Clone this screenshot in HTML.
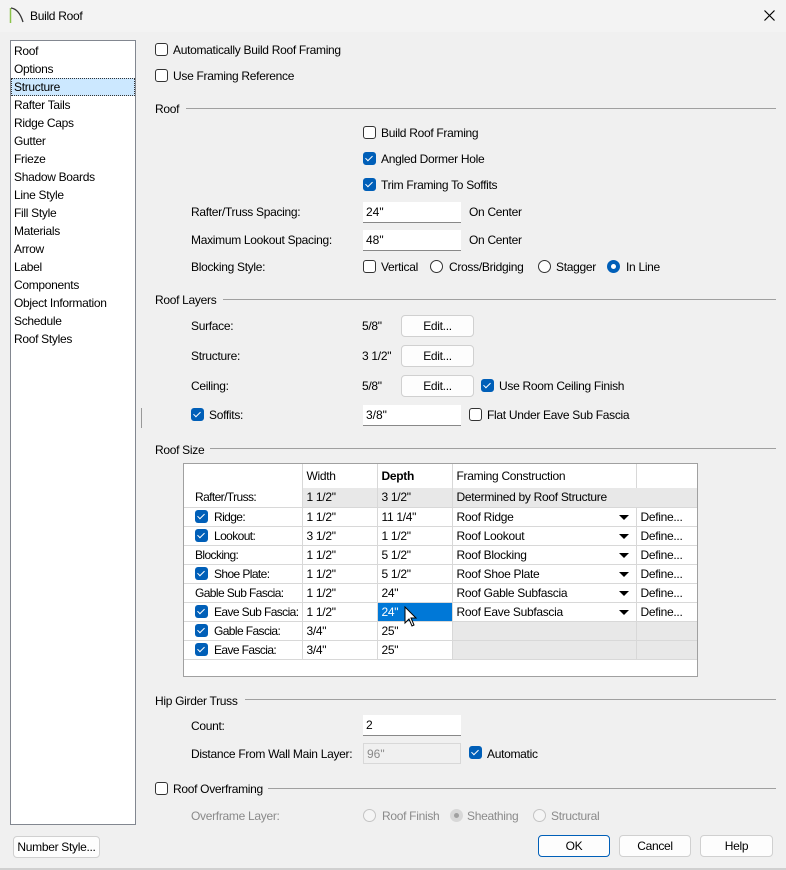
<!DOCTYPE html>
<html><head><meta charset="utf-8"><style>
*{box-sizing:border-box;margin:0;padding:0}
body{width:786px;height:870px;background:#f0f0f0;font:12px/14px "Liberation Sans",sans-serif;color:#000;position:relative;overflow:hidden}
.a{position:absolute;white-space:nowrap}
.t{position:absolute;white-space:nowrap;letter-spacing:-0.3px}
.cb{position:absolute;width:13px;height:13px;border:1px solid #333;border-radius:3px;background:#fff}
.cb.on{background:#005fb8;border-color:#005fb8}
.cb.on::after{content:"";position:absolute;left:3px;top:1px;width:3px;height:6px;border:solid #fff;border-width:0 1.3px 1.3px 0;transform:rotate(45deg)}
.rd{position:absolute;width:13px;height:13px;border:1px solid #333;border-radius:50%;background:#fff}
.rd.on{background:#005fb8;border-color:#005fb8}
.rd.on::after{content:"";position:absolute;left:3px;top:3px;width:5px;height:5px;border-radius:50%;background:#fff}
.rd.dis{border-color:#c4c4c4;background:#f5f5f5}
.rd.dis.on::after{content:"";position:absolute;left:3px;top:3px;width:5px;height:5px;border-radius:50%;background:#a0a0a0}
.rd.dis.on{background:#d8d8d8;border-color:#d8d8d8}
.in{position:absolute;height:21px;width:98px;background:#fff;border-bottom:1px solid #888;padding:3px 3px;}
.btn{position:absolute;height:22px;background:#fdfdfd;border:1px solid #d0d0d0;border-radius:4px;text-align:center;line-height:20px;letter-spacing:-0.3px}
.hl{position:absolute;height:1px;background:#a0a0a0}
.gr{color:#8a8a8a}
table{position:absolute;left:184px;top:464px;width:513px;border-collapse:collapse;background:#fff;table-layout:fixed}
td{border-right:1px solid #d8d8d8;border-bottom:1px solid #d8d8d8;height:19px;padding:0 4px;white-space:nowrap;letter-spacing:-0.3px;position:relative;overflow:hidden}
td:first-child{padding-left:11px;letter-spacing:-0.6px}
tr.h td{height:24px;border-bottom:none}
.g{background:#e8e8e8}
.tcb{position:relative;display:inline-block;vertical-align:-2px;margin-right:6px;width:13px;height:13px;border-radius:3px;background:#005fb8}
.tcb::after{content:"";position:absolute;left:4px;top:2px;width:3px;height:6px;border:solid #fff;border-width:0 1.3px 1.3px 0;transform:rotate(45deg)}
.arr{position:absolute;right:7px;top:7px;width:0;height:0;border-left:5px solid transparent;border-right:5px solid transparent;border-top:5px solid #000}
</style></head><body>
<div class="a" style="left:0;top:0;width:786px;height:32px;background:#f3f3f3"></div>
<svg class="a" style="left:9px;top:6px" width="16" height="18"><path d="M1.5 17V2" stroke="#8bc34a" stroke-width="1.5"/><path d="M2 2 Q10 3 14 16" stroke="#333" stroke-width="1.3" fill="none"/></svg>
<div class="t" style="left:30px;top:9px">Build Roof</div>
<svg class="a" style="left:764px;top:10px" width="11" height="11"><path d="M0.5 0.5L10.5 10.5M10.5 0.5L0.5 10.5" stroke="#000" stroke-width="1.2"/></svg>
<div class="a" style="left:0;top:868px;width:786px;height:2px;background:#d0d0d0"></div>

<div class="a" style="left:10px;top:40px;width:126px;height:785px;background:#fff;border:1px solid #828790"></div>
<div class="a" style="left:11px;top:78px;width:124px;height:18px;background:#cce8ff;border:1px dotted #333"></div>
<div class="t" style="left:14px;top:42px;line-height:18px">Roof<br>Options<br>Structure<br>Rafter Tails<br>Ridge Caps<br>Gutter<br>Frieze<br>Shadow Boards<br>Line Style<br>Fill Style<br>Materials<br>Arrow<br>Label<br>Components<br>Object Information<br>Schedule<br>Roof Styles</div>
<div class="btn" style="left:13px;top:836px;width:87px">Number Style...</div>

<div class="cb" style="left:155px;top:43px"></div><div class="t" style="left:173px;top:43px">Automatically Build Roof Framing</div>
<div class="cb" style="left:155px;top:69px"></div><div class="t" style="left:173px;top:69px">Use Framing Reference</div>

<div class="t" style="left:155px;top:102px">Roof</div><div class="hl" style="left:186px;top:108px;width:590px"></div>
<div class="cb" style="left:363px;top:126px"></div><div class="t" style="left:381px;top:126px">Build Roof Framing</div>
<div class="cb on" style="left:363px;top:152px"></div><div class="t" style="left:381px;top:152px">Angled Dormer Hole</div>
<div class="cb on" style="left:363px;top:178px"></div><div class="t" style="left:381px;top:178px">Trim Framing To Soffits</div>
<div class="t" style="left:191px;top:205px">Rafter/Truss Spacing:</div>
<div class="in" style="left:363px;top:202px">24"</div><div class="t" style="left:469px;top:205px">On Center</div>
<div class="t" style="left:191px;top:233px">Maximum Lookout Spacing:</div>
<div class="in" style="left:363px;top:230px">48"</div><div class="t" style="left:469px;top:233px">On Center</div>
<div class="t" style="left:191px;top:260px">Blocking Style:</div>
<div class="cb" style="left:363px;top:260px"></div><div class="t" style="left:381px;top:260px">Vertical</div>
<div class="rd" style="left:430px;top:260px"></div><div class="t" style="left:449px;top:260px">Cross/Bridging</div>
<div class="rd" style="left:538px;top:260px"></div><div class="t" style="left:556px;top:260px">Stagger</div>
<div class="rd on" style="left:607px;top:260px"></div><div class="t" style="left:626px;top:260px">In Line</div>

<div class="t" style="left:155px;top:293px">Roof Layers</div><div class="hl" style="left:223px;top:299px;width:553px"></div>
<div class="t" style="left:191px;top:319px">Surface:</div><div class="t" style="left:362px;top:319px">5/8"</div><div class="btn" style="left:401px;top:315px;width:73px">Edit...</div>
<div class="t" style="left:191px;top:349px">Structure:</div><div class="t" style="left:362px;top:349px">3 1/2"</div><div class="btn" style="left:401px;top:345px;width:73px">Edit...</div>
<div class="t" style="left:191px;top:379px">Ceiling:</div><div class="t" style="left:362px;top:379px">5/8"</div><div class="btn" style="left:401px;top:375px;width:73px">Edit...</div>
<div class="cb on" style="left:481px;top:379px"></div><div class="t" style="left:499px;top:379px">Use Room Ceiling Finish</div>
<div class="a" style="left:141px;top:408px;width:1px;height:20px;background:#999"></div>
<div class="cb on" style="left:191px;top:408px"></div><div class="t" style="left:209px;top:408px">Soffits:</div>
<div class="in" style="left:363px;top:405px">3/8"</div>
<div class="cb" style="left:469px;top:408px"></div><div class="t" style="left:487px;top:408px">Flat Under Eave Sub Fascia</div>

<div class="t" style="left:155px;top:443px">Roof Size</div><div class="hl" style="left:210px;top:448px;width:566px"></div>

<div class="a" style="left:183px;top:463px;width:515px;height:214px;background:#fff;border:1px solid #a0a0a0"></div>
<table>
<colgroup><col style="width:118px"><col style="width:75px"><col style="width:75px"><col style="width:184px"><col style="width:61px"></colgroup>
<tr class="h"><td></td><td>Width</td><td><b>Depth</b></td><td>Framing Construction</td><td style="border-right:none"></td></tr>
<tr><td>Rafter/Truss:</td><td class="g">1 1/2"</td><td class="g">3 1/2"</td><td class="g" colspan="2" style="border-right:none">Determined by Roof Structure</td></tr>
<tr><td><span class="tcb"></span>Ridge:</td><td>1 1/2"</td><td>11 1/4"</td><td>Roof Ridge<span class="arr"></span></td><td style="border-right:none">Define...</td></tr>
<tr><td><span class="tcb"></span>Lookout:</td><td>3 1/2"</td><td>1 1/2"</td><td>Roof Lookout<span class="arr"></span></td><td style="border-right:none">Define...</td></tr>
<tr><td>Blocking:</td><td>1 1/2"</td><td>5 1/2"</td><td>Roof Blocking<span class="arr"></span></td><td style="border-right:none">Define...</td></tr>
<tr><td><span class="tcb"></span>Shoe Plate:</td><td>1 1/2"</td><td>5 1/2"</td><td>Roof Shoe Plate<span class="arr"></span></td><td style="border-right:none">Define...</td></tr>
<tr><td>Gable Sub Fascia:</td><td>1 1/2"</td><td>24"</td><td>Roof Gable Subfascia<span class="arr"></span></td><td style="border-right:none">Define...</td></tr>
<tr><td><span class="tcb"></span>Eave Sub Fascia:</td><td>1 1/2"</td><td style="background:#0078d7;color:#fff">24"</td><td>Roof Eave Subfascia<span class="arr"></span></td><td style="border-right:none">Define...</td></tr>
<tr><td><span class="tcb"></span>Gable Fascia:</td><td>3/4"</td><td>25"</td><td class="g"></td><td class="g" style="border-right:none"></td></tr>
<tr><td><span class="tcb"></span>Eave Fascia:</td><td>3/4"</td><td>25"</td><td class="g"></td><td class="g" style="border-right:none"></td></tr>
</table>
<svg class="a" style="left:404px;top:606px" width="14" height="22"><path d="M1 1V17L5 13L8 20L10 19L7 12H12Z" fill="#fff" stroke="#000" stroke-width="1"/></svg>

<div class="t" style="left:155px;top:694px">Hip Girder Truss</div><div class="hl" style="left:245px;top:699px;width:531px"></div>
<div class="t" style="left:191px;top:719px">Count:</div><div class="in" style="left:363px;top:715px">2</div>
<div class="t" style="left:191px;top:747px">Distance From Wall Main Layer:</div>
<div class="in gr" style="left:363px;top:743px;background:#f0f0f0;border:1px solid #d8d8d8">96"</div>
<div class="cb on" style="left:469px;top:746px"></div><div class="t" style="left:487px;top:747px">Automatic</div>

<div class="cb" style="left:155px;top:782px"></div><div class="t" style="left:173px;top:782px">Roof Overframing</div><div class="hl" style="left:268px;top:788px;width:508px"></div>
<div class="t gr" style="left:191px;top:809px">Overframe Layer:</div>
<div class="rd dis" style="left:363px;top:809px"></div><div class="t gr" style="left:382px;top:809px">Roof Finish</div>
<div class="rd dis on" style="left:450px;top:809px"></div><div class="t gr" style="left:467px;top:809px">Sheathing</div>
<div class="rd dis" style="left:533px;top:809px"></div><div class="t gr" style="left:551px;top:809px">Structural</div>

<div class="btn" style="left:538px;top:835px;width:72px;border:1px solid #005fb8">OK</div>
<div class="btn" style="left:619px;top:835px;width:72px">Cancel</div>
<div class="btn" style="left:700px;top:835px;width:73px">Help</div>
</body></html>
